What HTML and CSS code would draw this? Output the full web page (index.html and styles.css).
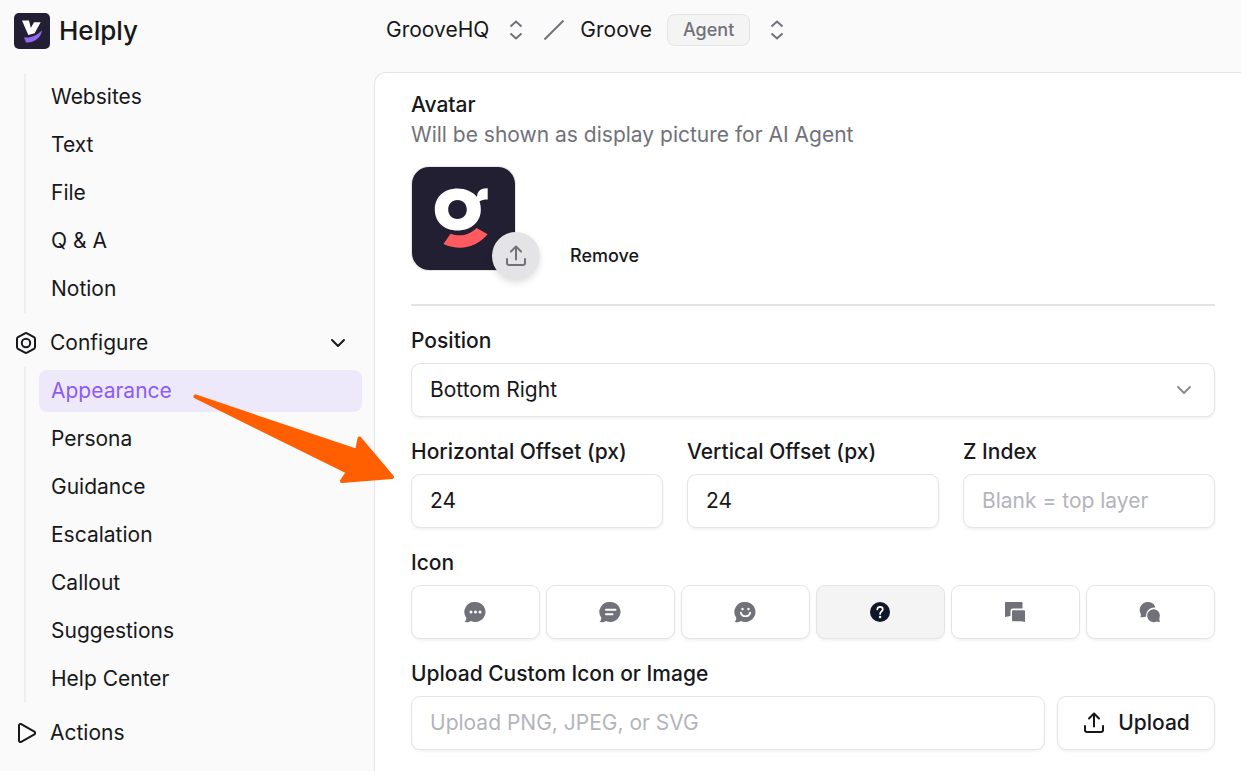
FILE: index.html
```html
<!DOCTYPE html>
<html lang="en">
<head>
  <meta charset="UTF-8">
  <meta name="viewport" content="width=device-width, initial-scale=1.0">
  <title>Helply - Appearance</title>
  <link rel="stylesheet" href="styles.css">
</head>
<body>
  <div class="app">

    <aside class="sidebar">
      <a href="#" class="brand">
        <svg class="brand-logo" viewBox="0 0 36 36" aria-hidden="true">
          <rect width="36" height="36" rx="5" fill="#231f32"/>
          <path d="M8 7.500h7l1.800 7.500L20 9.200h6.700L20.600 20.300 14.300 22z" fill="#fff"/>
          <path d="M10 24.500c7 .6 13-1.700 17.800-7.200-.2 7-7.500 13-15.800 12.200z" fill="#9168f5"/>
        </svg>
        <span>Helply</span>
      </a>

      <nav>
        <ul class="nav-group">
          <li><a href="#">Websites</a></li>
          <li><a href="#">Text</a></li>
          <li><a href="#">File</a></li>
          <li><a href="#">Q &amp; A</a></li>
          <li><a href="#">Notion</a></li>
        </ul>

        <button type="button" class="nav-heading">
          <svg width="24" height="24" viewBox="0 0 24 24" class="line-icon" aria-hidden="true">
            <path d="M11 2.300a2 2 0 0 1 2 0l7 3.900a2 2 0 0 1 1 1.700v8.200a2 2 0 0 1-1 1.700l-7 3.900a2 2 0 0 1-2 0l-7-3.900a2 2 0 0 1-1-1.700V7.900a2 2 0 0 1 1-1.700z"/>
            <circle cx="12" cy="12" r="4.200"/>
          </svg>
          <span>Configure</span>
          <svg width="24" height="24" viewBox="0 0 24 24" class="line-icon arrow-down" aria-hidden="true"><path d="M6 9l6 6 6-6"/></svg>
        </button>

        <ul class="nav-group">
          <li><a href="#" class="active">Appearance</a></li>
          <li><a href="#">Persona</a></li>
          <li><a href="#">Guidance</a></li>
          <li><a href="#">Escalation</a></li>
          <li><a href="#">Callout</a></li>
          <li><a href="#">Suggestions</a></li>
          <li><a href="#">Help Center</a></li>
        </ul>

        <button type="button" class="nav-heading">
          <svg width="24" height="24" viewBox="0 0 24 24" class="line-icon" aria-hidden="true"><path d="M5 4.400v15.200a1.500 1.500 0 0 0 2.200 1.300l13.200-7.600a1.500 1.500 0 0 0 0-2.600L7.200 3.100A1.500 1.500 0 0 0 5 4.400z"/></svg>
          <span>Actions</span>
        </button>
      </nav>
    </aside>

    <div class="main">
      <header class="topbar">
        <button type="button" class="switcher">
          GrooveHQ
          <svg width="14" height="20" viewBox="0 0 14 20" aria-hidden="true"><path d="M1.500 6.500L7 1.500l5.500 5M1.500 13.500l5.500 5 5.500-5"/></svg>
        </button>
        <svg class="slash" width="20" height="20" viewBox="0 0 20 20" aria-hidden="true"><path d="M.5 19.500l19-19"/></svg>
        <button type="button" class="switcher">
          Groove
          <span class="badge">Agent</span>
          <svg width="14" height="20" viewBox="0 0 14 20" aria-hidden="true"><path d="M1.500 6.500L7 1.500l5.500 5M1.500 13.500l5.500 5 5.500-5"/></svg>
        </button>
      </header>

      <form class="panel">
        <section class="avatar-section">
          <h2>Avatar</h2>
          <p>Will be shown as display picture for AI Agent</p>
          <div class="avatar-row">
            <div class="avatar">
              <svg viewBox="0 0 103 103" role="img" aria-label="Groove logo">
                <rect width="103" height="103" fill="#231f32"/>
                <path fill="#fff" fill-rule="evenodd" d="M45.500 21.500c8 0 15 3 19.500 8.500 0-6 4.500-9.300 10.700-8.800V32.500c-4 0-6 .5-8.200 2 1 3 1.300 5 1.300 8.500 0 12-10 20.500-23.300 20.500S22.800 55 22.800 42.500s9.400-21 22.700-21zM45.500 33c-5.500 0-9.300 3.900-9.300 9.500s3.800 9.500 9.300 9.500 9.300-3.900 9.300-9.500S51 33 45.500 33z"/>
                <path fill="#ff5a5f" d="M38.500 66.800c10 3.200 18.500 1.500 26-5.800l11.200 6.300C64.500 80.500 48 84.500 31.500 77z"/>
              </svg>
              <button type="button" class="avatar-upload" aria-label="Upload avatar">
                <svg width="24" height="24" viewBox="0 0 24 24" class="line-icon" aria-hidden="true"><path d="M12 15.500V3M7 7.500l5-5 5 5M3 15v4a2 2 0 0 0 2 2h14a2 2 0 0 0 2-2v-4"/></svg>
              </button>
            </div>
            <button type="button" class="remove">Remove</button>
          </div>
        </section>

        <div class="field">
          <label for="position">Position</label>
          <div class="select-box">
            <select id="position">
              <option>Bottom Right</option>
              <option>Bottom Left</option>
            </select>
            <svg width="24" height="24" viewBox="0 0 24 24" class="line-icon" aria-hidden="true"><path d="M6 9l6 6 6-6"/></svg>
          </div>
        </div>

        <div class="offsets">
          <div class="field">
            <label for="offset-x">Horizontal Offset (px)</label>
            <input type="text" id="offset-x" value="24">
          </div>
          <div class="field">
            <label for="offset-y">Vertical Offset (px)</label>
            <input type="text" id="offset-y" value="24">
          </div>
          <div class="field">
            <label for="z-index">Z Index</label>
            <input type="text" id="z-index" placeholder="Blank = top layer">
          </div>
        </div>

        <div class="field" role="radiogroup" aria-labelledby="icon-label">
          <span class="label" id="icon-label">Icon</span>
          <div class="icons">
            <label class="icon-option">
              <input type="radio" name="icon" aria-label="Chat dots">
              <svg viewBox="0 0 22 22"><path d="M11.500 1a10 10 0 1 1-4.600 18.900C5 21.300 3 21.300.5 21c1.500-1.500 1.800-2.500 1.800-4.200A10 10 0 0 1 11.500 1z"/><g fill="#fff"><circle cx="7" cy="11" r="1.500"/><circle cx="11.500" cy="11" r="1.500"/><circle cx="16" cy="11" r="1.500"/></g></svg>
            </label>
            <label class="icon-option">
              <input type="radio" name="icon" aria-label="Chat lines">
              <svg viewBox="0 0 22 22"><path d="M11.500 1a10 10 0 1 1-4.600 18.900C5 21.300 3 21.300.5 21c1.500-1.500 1.800-2.500 1.800-4.200A10 10 0 0 1 11.500 1z"/><path d="M7 8.700h9.500M7 13.200h6.500" fill="none" stroke="#fff" stroke-width="2" stroke-linecap="round"/></svg>
            </label>
            <label class="icon-option">
              <input type="radio" name="icon" aria-label="Smile">
              <svg viewBox="0 0 22 22"><path d="M11.500 1a10 10 0 1 1-4.600 18.900C5 21.300 3 21.300.5 21c1.500-1.500 1.800-2.500 1.800-4.200A10 10 0 0 1 11.500 1z"/><path d="M6.800 11.500c.8 5 8.600 5 9.400 0" fill="none" stroke="#fff" stroke-width="1.700" stroke-linecap="round"/><circle cx="8.500" cy="8" r="1.200" fill="#fff"/><circle cx="14.500" cy="8" r="1.200" fill="#fff"/></svg>
            </label>
            <label class="icon-option">
              <input type="radio" name="icon" aria-label="Question" checked>
              <svg viewBox="0 0 22 22"><circle cx="11" cy="11" r="10"/><path d="M8.300 8.500c.2-3.600 5.500-3.400 5.500-.2 0 2.200-2.700 2.100-2.700 4.700" fill="none" stroke="#fff" stroke-width="1.700" stroke-linecap="round"/><circle cx="11.100" cy="16" r="1.200" fill="#fff"/></svg>
            </label>
            <label class="icon-option">
              <input type="radio" name="icon" aria-label="Square chats">
              <svg viewBox="0 0 22 22"><path d="M1.500 1h16q1 0 1 1v5.500H9Q6.500 7.500 6.500 10v5l-5.500 1V2q0-1 .5-1z"/><path d="M9 9.200h11q1 0 1 1V21l-3.500-.8H9q-1 0-1-1v-9q0-1 1-1z"/></svg>
            </label>
            <label class="icon-option">
              <input type="radio" name="icon" aria-label="Round chats">
              <svg viewBox="0 0 22 22"><path d="M9 1c3.500 0 6.500 2.200 7.400 5.500-5.400-.8-9.700 3.600-9.300 9-1.500.3-3.500 1-5.800.8.700-1.500.7-2.300.4-3.500A8 8 0 0 1 9 1z"/><path d="M14.500 8.300a6.400 6.400 0 0 1 5.800 9c0 1.300.2 2.400.7 3.500-1 .3-2.500 0-3.500-.4a6.400 6.400 0 1 1-3-12.100z"/></svg>
            </label>
          </div>
        </div>

        <div class="field">
          <label for="custom-icon">Upload Custom Icon or Image</label>
          <div class="upload-row">
            <input type="text" id="custom-icon" placeholder="Upload PNG, JPEG, or SVG">
            <button type="button" class="upload-btn">
              <svg width="24" height="24" viewBox="0 0 24 24" class="line-icon" aria-hidden="true"><path d="M12 15.500V3M7 7.500l5-5 5 5M3 15v4a2 2 0 0 0 2 2h14a2 2 0 0 0 2-2v-4"/></svg>
              Upload
            </button>
          </div>
        </div>
      </form>
    </div>

    <!-- callout arrow pointing at the offset fields -->
    <svg class="pointer" width="204" height="94" viewBox="0 0 204 94" aria-hidden="true">
      <path d="M4.500 5.500L166 60l2.500-12.500L201 86l-50 4 6-9z"/>
    </svg>
  </div>
</body>
</html>
```
FILE: styles.css
```css
* {
  margin: 0;
  padding: 0;
  box-sizing: border-box;
}

body {
  background-color: #fafafa;
  color: #18181b;
  font-family: Inter, "Liberation Sans", sans-serif;
  font-size: 21px;
  line-height: 30px;
}

button,
input,
select {
  font: inherit;
  color: inherit;
}

button {
  background: none;
  border: none;
  cursor: pointer;
}

a {
  color: inherit;
  text-decoration: none;
}

.line-icon {
  fill: none;
  stroke: currentColor;
  stroke-width: 2;
  stroke-linecap: round;
  stroke-linejoin: round;
  flex-shrink: 0;
}

.app {
  position: relative;
  display: grid;
  grid-template-columns: 374px minmax(0, 1fr);
  min-height: 100vh;
}

/* Sidebar */
.brand {
  display: flex;
  align-items: center;
  gap: 9px;
  height: 73px;
  padding: 0 14px 11px;
  font-size: 26px;
  font-weight: 500;
}

.brand-logo {
  width: 36px;
  height: 36px;
}

.nav-group {
  display: flex;
  flex-direction: column;
  gap: 6px;
  list-style: none;
  margin: 0 12px 0 24px;
  padding: 3px 0 3px 13px;
  border-left: 2px solid #efeff0;
}

.nav-group a {
  display: block;
  padding: 6px 12px;
  border-radius: 8px;
}

.nav-group a.active {
  background-color: #eee9fa;
  color: #8b5cf6;
}

.nav-heading {
  display: flex;
  align-items: center;
  gap: 12px;
  width: 100%;
  height: 42px;
  margin: 9px 0 3px;
  padding: 0 24px 0 14px;
  text-align: left;
}

.arrow-down {
  margin-left: auto;
}

/* Main area */
.main {
  display: flex;
  flex-direction: column;
}

.topbar {
  display: flex;
  align-items: center;
  gap: 16px;
  height: 60px;
  margin-bottom: 12px;
  padding-left: 12px;
}

.switcher {
  display: flex;
  align-items: center;
  gap: 20px;
}

.switcher svg,
.slash {
  fill: none;
  stroke: #71717a;
  stroke-width: 2;
}

.slash {
  margin-left: 5px;
}

.badge {
  height: 32px;
  margin-left: -5px;
  padding: 0 15px;
  border: 1px solid #e4e4e7;
  border-radius: 8px;
  background-color: #f4f4f5;
  color: #71717a;
  font-size: 18px;
  font-weight: 500;
}

.panel {
  flex: 1;
  display: flex;
  flex-direction: column;
  gap: 20px;
  padding: 17px 26px 20px 36px;
  background-color: #fff;
  border: 1px solid #e4e4e7;
  border-right: none;
  border-bottom: none;
  border-top-left-radius: 12px;
}

.avatar-section {
  padding-bottom: 33px;
  border-bottom: 2px solid #e4e4e7;
}

h2,
.field > label,
.label {
  font-size: 21px;
  font-weight: 500;
}

.avatar-section p {
  color: #71717a;
}

.avatar-row {
  display: flex;
  align-items: flex-end;
  gap: 54px;
  margin-top: 16px;
}

.avatar {
  position: relative;
  width: 105px;
  height: 105px;
}

.avatar > svg {
  display: block;
  width: 105px;
  height: 105px;
  border: 1px solid #e4e4e7;
  border-radius: 18px;
}

.avatar-upload {
  position: absolute;
  right: -24px;
  bottom: -9px;
  display: flex;
  align-items: center;
  justify-content: center;
  width: 48px;
  height: 48px;
  border-radius: 50%;
  background-color: #e4e4e7;
  color: #71717a;
  box-shadow: 0 3px 6px rgba(0, 0, 0, 0.12);
}

.remove {
  font-size: 18px;
  font-weight: 500;
}

/* Form fields */
.field {
  display: flex;
  flex-direction: column;
  gap: 7px;
}

.offsets {
  display: grid;
  grid-template-columns: repeat(3, 1fr);
  gap: 24px;
}

input[type="text"],
select,
.icon-option,
.upload-btn {
  width: 100%;
  height: 54px;
  padding: 0 18px;
  background-color: #fff;
  border: 1px solid #e4e4e7;
  border-radius: 9px;
  box-shadow: 0 2px 3px rgba(0, 0, 0, 0.05);
}

input[type="text"] {
  padding-bottom: 2px;
}

input::placeholder {
  color: #b4b4bb;
  opacity: 1;
}

select {
  appearance: none;
}

.select-box {
  position: relative;
}

.select-box svg {
  position: absolute;
  top: 15px;
  right: 19px;
  color: #8b8b90;
  pointer-events: none;
}

.icons {
  display: grid;
  grid-template-columns: repeat(6, 1fr);
  gap: 6px;
}

.icon-option {
  display: flex;
  align-items: center;
  justify-content: center;
  padding-right: 20px;
  cursor: pointer;
}

.icon-option input {
  position: absolute;
  opacity: 0;
}

.icon-option svg {
  width: 22px;
  height: 22px;
  fill: #71717a;
}

.icon-option:has(input:checked) {
  background-color: #f4f4f5;
}

.icon-option input:checked + svg {
  fill: #0f172a;
}

.upload-row {
  display: flex;
  gap: 12px;
}

.upload-row input {
  flex: 1;
}

.upload-btn {
  display: flex;
  align-items: center;
  justify-content: center;
  gap: 12px;
  width: 158px;
  font-weight: 500;
}

.pointer {
  position: absolute;
  left: 191px;
  top: 391px;
  fill: #ff5f00;
  stroke: #ff5f00;
  stroke-width: 4;
  stroke-linejoin: round;
  pointer-events: none;
}
```
